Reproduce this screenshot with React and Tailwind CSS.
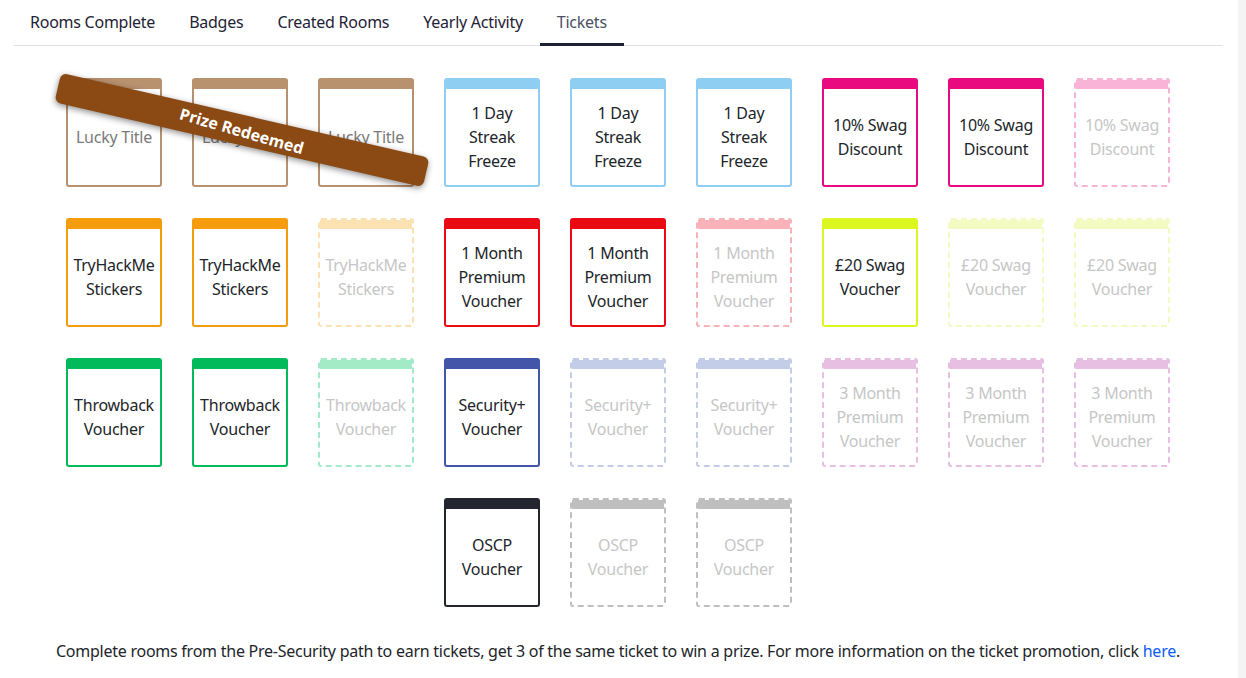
import React from "react";

const tabs = ["Rooms Complete", "Badges", "Created Rooms", "Yearly Activity", "Tickets"];

const T = (label, color, state) => ({ label, color, state });

const tickets = [
  T(["Lucky Title"], "#b8916f", "redeemed"),
  T(["Lucky Title"], "#b8916f", "redeemed"),
  T(["Lucky Title"], "#b8916f", "redeemed"),
  T(["1 Day", "Streak", "Freeze"], "#8ecef3", "on"),
  T(["1 Day", "Streak", "Freeze"], "#8ecef3", "on"),
  T(["1 Day", "Streak", "Freeze"], "#8ecef3", "on"),
  T(["10% Swag", "Discount"], "#ea0a80", "on"),
  T(["10% Swag", "Discount"], "#ea0a80", "on"),
  T(["10% Swag", "Discount"], "#f9b3d7", "off"),
  T(["TryHackMe", "Stickers"], "#f49c0b", "on"),
  T(["TryHackMe", "Stickers"], "#f49c0b", "on"),
  T(["TryHackMe", "Stickers"], "#fce2b3", "off"),
  T(["1 Month", "Premium", "Voucher"], "#ea0a14", "on"),
  T(["1 Month", "Premium", "Voucher"], "#ea0a14", "on"),
  T(["1 Month", "Premium", "Voucher"], "#f9b3b8", "off"),
  T(["£20 Swag", "Voucher"], "#dcf720", "on"),
  T(["£20 Swag", "Voucher"], "#f4fbc2", "off"),
  T(["£20 Swag", "Voucher"], "#f4fbc2", "off"),
  T(["Throwback", "Voucher"], "#03ba5b", "on"),
  T(["Throwback", "Voucher"], "#03ba5b", "on"),
  T(["Throwback", "Voucher"], "#a3ebc6", "off"),
  T(["Security+", "Voucher"], "#4355a8", "on"),
  T(["Security+", "Voucher"], "#c4cde7", "off"),
  T(["Security+", "Voucher"], "#c4cde7", "off"),
  T(["3 Month", "Premium", "Voucher"], "#e7bfe2", "off"),
  T(["3 Month", "Premium", "Voucher"], "#e7bfe2", "off"),
  T(["3 Month", "Premium", "Voucher"], "#e7bfe2", "off"),
  T(["OSCP", "Voucher"], "#23262e", "on"),
  T(["OSCP", "Voucher"], "#bfbfbf", "off"),
  T(["OSCP", "Voucher"], "#bfbfbf", "off"),
];

function Ticket({ t }) {
  const off = t.state === "off";
  const textCls =
    t.state === "on"
      ? "text-[#212529]"
      : t.state === "redeemed"
      ? "text-[#7a7a7a]"
      : "text-[#c6c6c6]";
  return (
    <div
      className={`w-[96px] h-[109px] flex flex-col rounded-[3px] border-2 bg-white ${
        off ? "border-dashed" : "border-solid"
      }`}
      style={{ borderColor: t.color }}
    >
      <div className="h-[9px] shrink-0" style={{ backgroundColor: t.color }} />
      <div className={`flex-1 flex flex-col items-center justify-center text-[16px] leading-[24px] text-center ${textCls}`}>
        {t.label.map((l, i) => (
          <div key={i}>{l}</div>
        ))}
      </div>
    </div>
  );
}

export default function App() {
  return (
    <div
      className="flex w-[1246px] h-[678px] bg-white overflow-hidden tracking-[-0.25px]"
      style={{ fontFamily: '"Noto Sans", "Open Sans", sans-serif' }}
    >
      <div className="flex-1 flex flex-col pl-[13px] pr-[15px]">
        <div className="flex border-b border-[#e2e2e2] h-[46px]">
          {tabs.map((tab) => {
            const active = tab === "Tickets";
            return (
              <div
                key={tab}
                className={`px-[17px] flex items-center h-full text-[16px] relative ${
                  active ? "text-[#4b5263]" : "text-[#1f2235]"
                }`}
              >
                <span className="-mt-[1px]">{tab}</span>
                {active && (
                  <div className="absolute left-0 right-0 bottom-[-1px] h-[3px] bg-[#1c2136]" />
                )}
              </div>
            );
          })}
        </div>

        <div className="relative w-[1104px] mx-auto mt-[32px] flex flex-wrap justify-center gap-x-[30px] gap-y-[31px]">
          {tickets.map((t, i) => (
            <Ticket key={i} t={t} />
          ))}
          <div className="absolute left-[-13px] top-[37px] w-[378px] h-[30px] rotate-[13deg] rounded-[6px] bg-[#8b4a13] shadow-[0_2px_6px_rgba(0,0,0,0.45)] flex items-center justify-center text-white font-bold text-[16px] tracking-normal">
            <span className="rotate-[3deg] translate-y-[1px]">Prize Redeemed</span>
          </div>
        </div>

        <div className="mt-[32px] text-center text-[16px] leading-[24px] text-[#212529]">
          Complete rooms from the Pre-Security path to earn tickets, get 3 of the same ticket to win a prize. For more information on the ticket promotion, click{" "}
          <span className="text-[#0d5cf5]">here</span>.
        </div>
      </div>
      <div className="w-[8px] bg-[#f4f4f4]" />
    </div>
  );
}
